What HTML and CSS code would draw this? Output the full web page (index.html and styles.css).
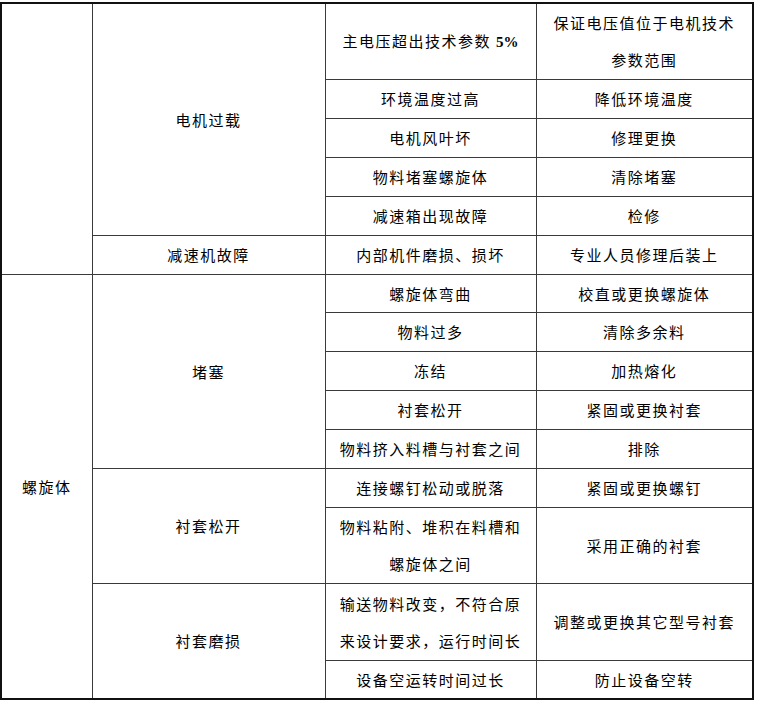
FILE: index.html
```html
<!DOCTYPE html>
<html lang="zh">
<head>
<meta charset="utf-8">
<title>故障表</title>
<link rel="stylesheet" href="styles.css">
</head>
<body>
<table class="fault-table">
  <colgroup>
    <col class="c1"><col class="c2"><col class="c3"><col class="c4">
  </colgroup>
  <tbody>
    <tr class="h2">
      <td rowspan="6"></td>
      <td rowspan="5">电机过载</td>
      <td>主电压超出技术参数 <b class="latin">5%</b></td>
      <td>保证电压值位于电机技术参数范围</td>
    </tr>
    <tr class="h1"><td>环境温度过高</td><td>降低环境温度</td></tr>
    <tr class="h1"><td>电机风叶坏</td><td>修理更换</td></tr>
    <tr class="h1"><td>物料堵塞螺旋体</td><td>清除堵塞</td></tr>
    <tr class="h1"><td>减速箱出现故障</td><td>检修</td></tr>
    <tr class="h1"><td>减速机故障</td><td>内部机件磨损、损坏</td><td>专业人员修理后装上</td></tr>
    <tr class="h1a">
      <td rowspan="9">螺旋体</td>
      <td rowspan="5">堵塞</td>
      <td>螺旋体弯曲</td><td>校直或更换螺旋体</td>
    </tr>
    <tr class="h1"><td>物料过多</td><td>清除多余料</td></tr>
    <tr class="h1"><td>冻结</td><td>加热熔化</td></tr>
    <tr class="h1"><td>衬套松开</td><td>紧固或更换衬套</td></tr>
    <tr class="h1"><td>物料挤入料槽与衬套之间</td><td>排除</td></tr>
    <tr class="h1">
      <td rowspan="2">衬套松开</td>
      <td>连接螺钉松动或脱落</td><td>紧固或更换螺钉</td>
    </tr>
    <tr class="h2"><td>物料粘附、堆积在料槽和螺旋体之间</td><td>采用正确的衬套</td></tr>
    <tr class="h2b">
      <td rowspan="2">衬套磨损</td>
      <td>输送物料改变，不符合原来设计要求，运行时间长</td><td>调整或更换其它型号衬套</td>
    </tr>
    <tr class="h1a"><td>设备空运转时间过长</td><td>防止设备空转</td></tr>
  </tbody>
</table>
</body>
</html>
```

FILE: styles.css
```css
html, body {
  margin: 0;
  padding: 0;
  background: #ffffff;
}
body {
  padding-top: 2px;
  font-family: "Noto Sans CJK SC", "Noto Sans", sans-serif;
  font-size: 15px;
  color: #000;
}
.fault-table {
  border-collapse: collapse;
  table-layout: fixed;
  width: 752px;
  border: 2px solid #111;
}
.c1 { width: 91px; }
.c2 { width: 233px; }
.c3 { width: 211px; }
.c4 { width: 217px; }
.fault-table td {
  border: 1px solid #3a3a3a;
  padding: 0 10px;
  text-align: center;
  vertical-align: middle;
  line-height: 37px;
  letter-spacing: 1.5px;
  white-space: normal;
}
.h1 { height: 39px; }
.h1a { height: 38px; }
.h2 { height: 76px; }
.h2b { height: 77px; }
.latin {
  font-family: "Liberation Serif", serif;
  font-weight: bold;
  letter-spacing: 0;
}
```
